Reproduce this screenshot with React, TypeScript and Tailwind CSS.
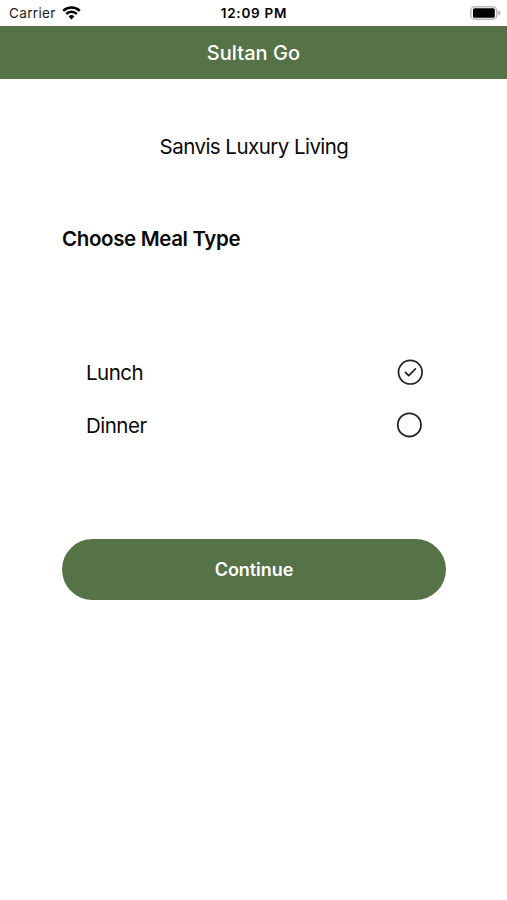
import React from 'react';

function StatusBar() {
  return (
    <header className="grid h-[26px] grid-cols-3 items-center pl-[9px] pr-[6px] text-[13.5px] leading-none text-[#222]">
      <div className="flex items-center gap-[6px]">
        <span className="pt-px tracking-[0.35px]">Carrier</span>
        <svg width="19" height="14" viewBox="0 0 19 14" fill="none" stroke="#000" strokeWidth="2.5">
          <path d="M1.2 4.8a12 12 0 0 1 16.6 0" />
          <path d="M4.2 8a7.6 7.6 0 0 1 10.6 0" />
          <path d="M9.5 13.5 6.6 10.5a4.2 4.2 0 0 1 5.8 0z" fill="#000" stroke="none" />
        </svg>
      </div>
      <span className="pr-[2px] pt-px text-center font-semibold tracking-[0.75px] text-black">12:09 PM</span>
      <svg className="justify-self-end" width="31" height="14" viewBox="0 0 31 14">
        <rect x="0.8" y="0.8" width="26" height="12.4" rx="3.8" fill="none" stroke="#bbb" strokeWidth="1.5" />
        <rect x="3" y="2.3" width="21.8" height="9.4" rx="1.5" fill="#000" />
        <path d="M28.3 4.6v4.8q2.2-.8 2.2-2.4t-2.2-2.4" fill="#aaa" />
      </svg>
    </header>
  );
}

function LunchIcon() {
  return (
    <svg width="26" height="26" viewBox="0 0 26 26" fill="none" stroke="#222" strokeWidth="1.7" strokeLinecap="round" strokeLinejoin="round">
      <circle cx="13.3" cy="13.2" r="11.8" />
      <path d="m8.5 13.4 3.2 3.3 6.7-6.9" />
    </svg>
  );
}

function DinnerIcon() {
  return (
    <svg width="26" height="26" viewBox="0 0 26 26" fill="none" stroke="#222" strokeWidth="1.8">
      <circle cx="13.4" cy="12.9" r="11.6" />
    </svg>
  );
}

export default function App() {
  return (
    <div className="flex h-[900px] flex-col bg-white font-['Inter','Liberation_Sans',sans-serif] text-[20.5px] text-[#0a0a0a]">
      <StatusBar />
      <div className="flex h-[53px] items-center justify-center bg-[#567348] text-[20px] font-medium tracking-[0.05px] text-white">Sultan Go</div>
      <main className="flex flex-col pl-[62px] pr-[61px]">
        <p className="mt-[53px] text-center leading-[30px] tracking-[-0.54px]">Sanvis Luxury Living</p>
        <h1 className="mt-[62px] font-semibold leading-[30px] tracking-[-0.36px]">Choose Meal Type</h1>
        <ul className="mt-[92px] pl-[24px] pr-[23px] tracking-[-0.5px]">
          <li className="flex h-[52px] items-center justify-between">
            <span className="pt-[3px]">Lunch</span>
            <LunchIcon />
          </li>
          <li className="flex h-[53px] items-center justify-between pr-px">
            <span className="pt-[3px]">Dinner</span>
            <DinnerIcon />
          </li>
        </ul>
        <button className="mt-[88px] h-[61px] rounded-full bg-[#567348] text-[18px] font-semibold tracking-[-0.05px] text-white">Continue</button>
      </main>
    </div>
  );
}
